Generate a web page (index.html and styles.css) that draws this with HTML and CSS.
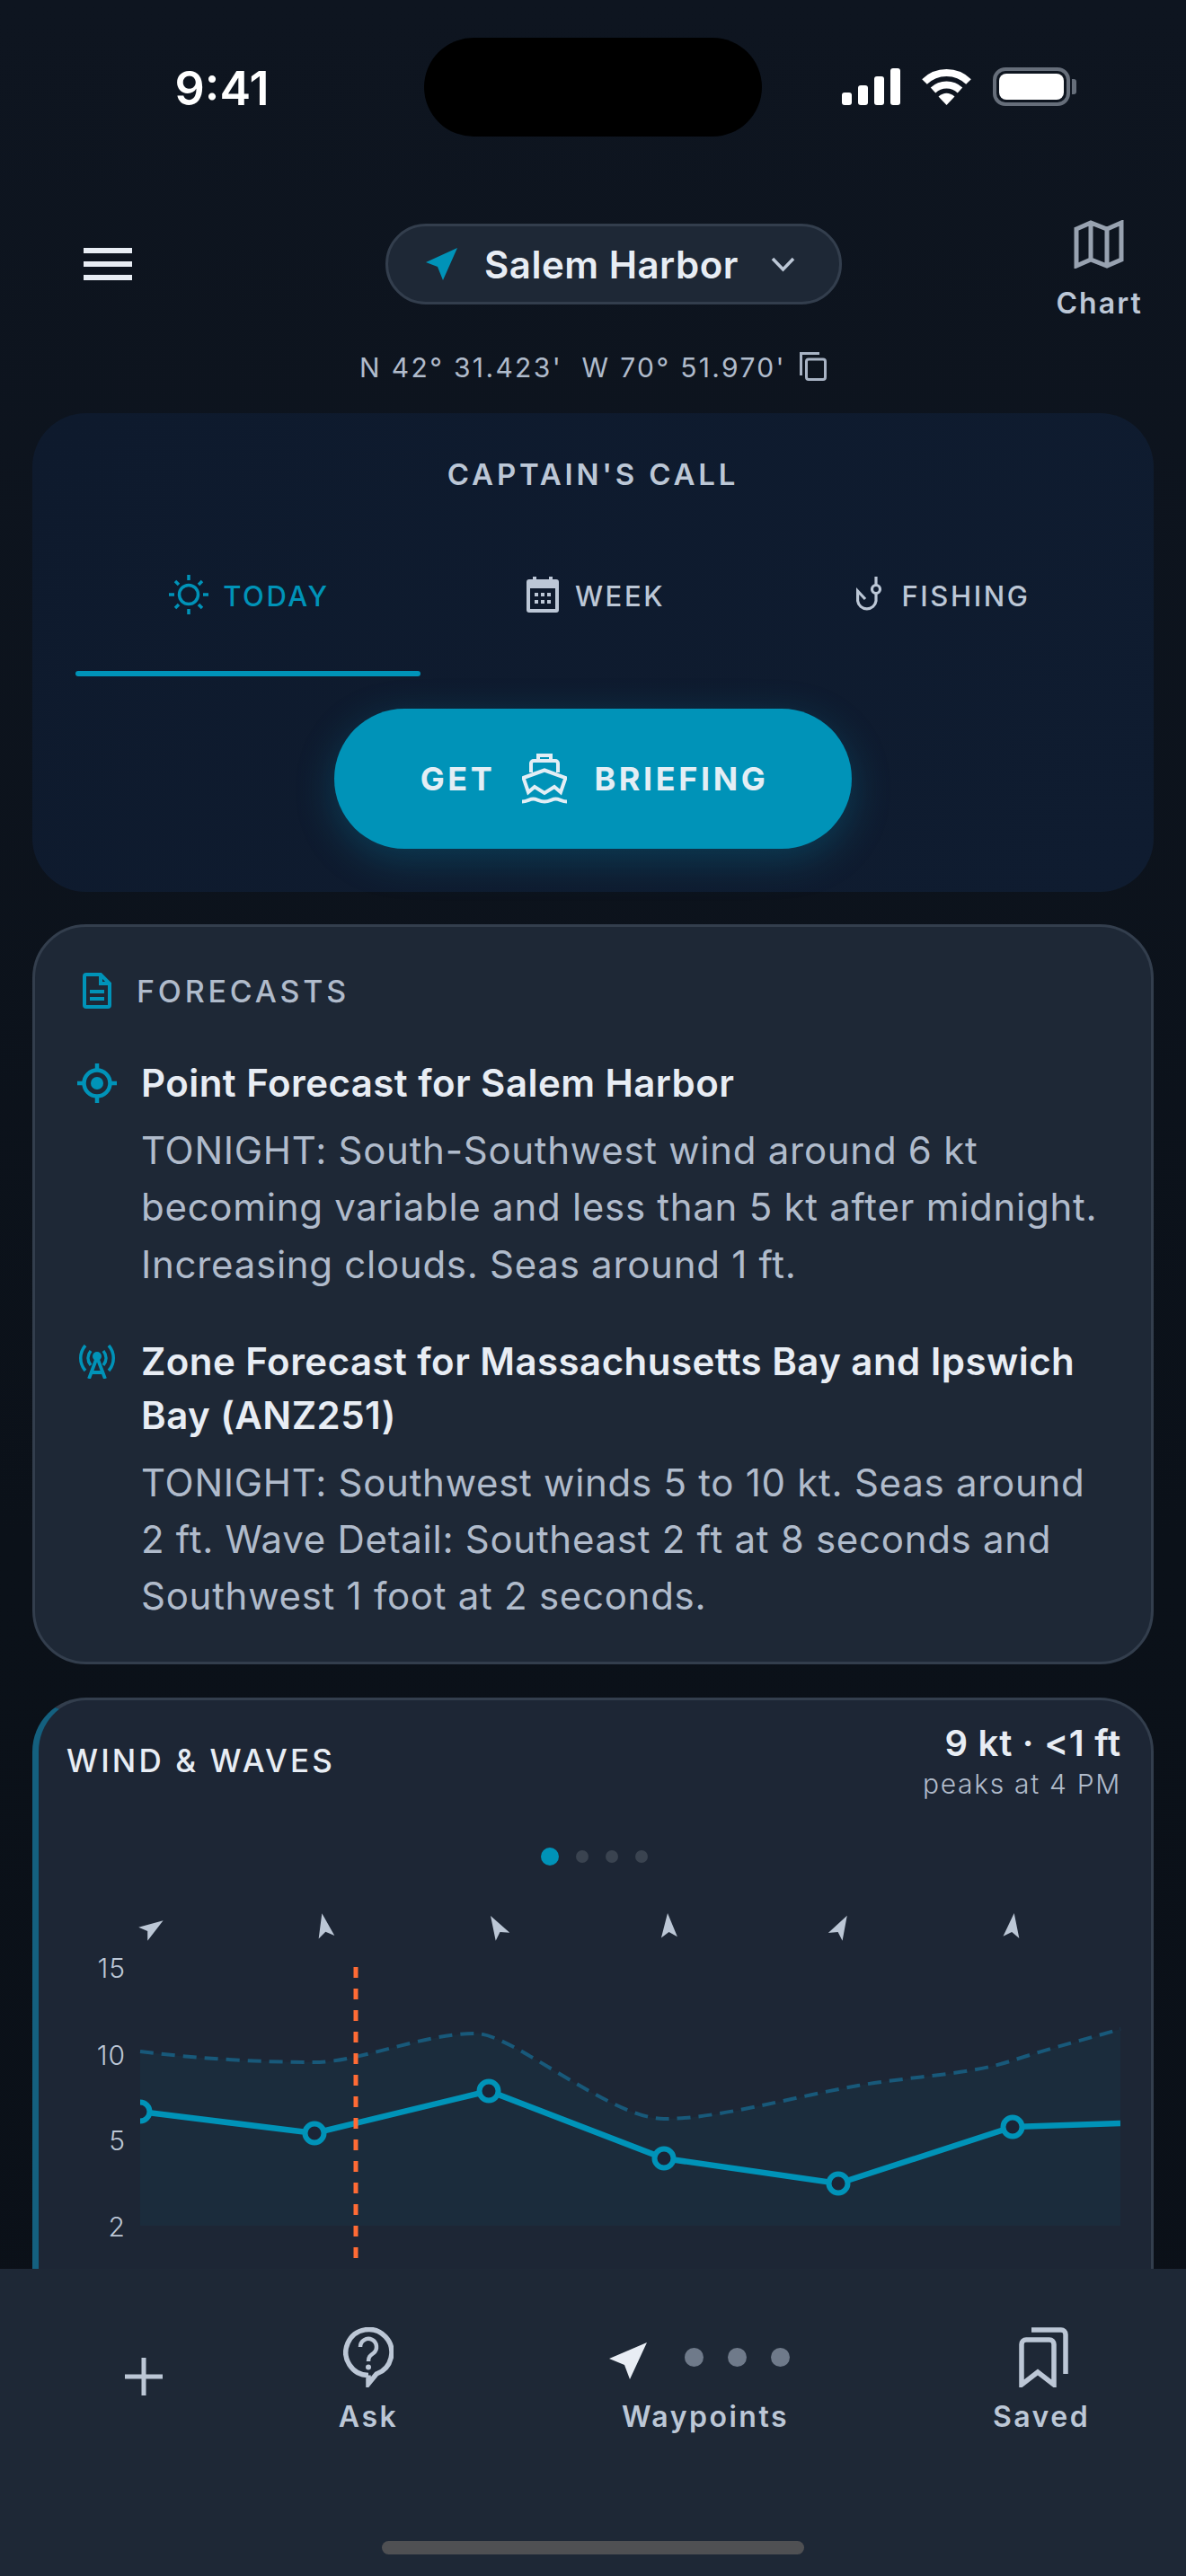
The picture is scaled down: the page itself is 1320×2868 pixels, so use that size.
FILE: index.html
```html
<!DOCTYPE html>
<html lang="en">
<head>
    <meta charset="UTF-8">
    <meta name="viewport" content="width=device-width, initial-scale=1.0">
    <title>Captain's Call</title>
    <link rel="stylesheet" href="styles.css">
</head>
<body>
<div class="app">
    <main class="main">
        <div class="status">
            <div class="status-time">9:41</div>
            <div class="island"></div>
            <div class="status-icons">
                <div class="signal"><span class="b1"></span><span class="b2"></span><span class="b3"></span><span class="b4"></span></div>
                <svg class="wifi" width="57" height="41" viewBox="0 0 57 41">
                    <path d="M4 15A35 35 0 0 1 53 15" fill="none" stroke="#fff" stroke-width="8"/>
                    <path d="M13.5 24.5A22 22 0 0 1 43.5 24.5" fill="none" stroke="#fff" stroke-width="8"/>
                    <path d="M19.5 31.5Q28.5 24 37.5 31.5L28.5 41Z" fill="#fff"/>
                </svg>
                <div class="battery">
                    <div class="battery-body"><div class="battery-fill"></div></div>
                    <div class="battery-cap"></div>
                </div>
            </div>
        </div>

        <div class="top-bar">
            <div class="menu-col">
                <div class="menu"><span></span><span></span><span></span></div>
            </div>
            <div class="location">
                <svg width="38" height="36" viewBox="0 0 38 36"><path d="M36 0L1 16L14 21L20 36Z" fill="#0093b8"/></svg>
                <span class="location-name">Salem Harbor</span>
                <svg class="chevron" width="27" height="18" viewBox="0 0 27 18"><path d="M2 3L13.5 15L25 3" fill="none" stroke="#bcc7d6" stroke-width="3.5"/></svg>
            </div>
            <div class="chart-link">
                <svg width="56" height="54" viewBox="0 0 56 54"><path d="M3 10L19 3L37 10L53 3V44L37 51L19 44L3 51ZM19 3V44M37 10V51" fill="none" stroke="#98a2b0" stroke-width="5" stroke-linejoin="miter"/></svg>
                <span>Chart</span>
            </div>
        </div>

        <div class="coords">
            <span>N 42° 31.423'&nbsp; W 70° 51.970'</span>
            <svg width="30" height="32" viewBox="0 0 30 32"><path d="M1.500 26V1.500H22" fill="none" stroke="#a8b3c4" stroke-width="3"/><rect x="7.500" y="8" width="21" height="22.500" rx="2.500" fill="none" stroke="#a8b3c4" stroke-width="3"/></svg>
        </div>

        <section class="call-card">
            <div class="call-title">CAPTAIN'S CALL</div>
            <div class="tabs">
                <div class="tab active">
                    <div class="tab-label">
                        <svg width="44" height="44" viewBox="0 0 44 44" fill="none" stroke="#0093b8" stroke-width="3.500"><circle cx="22" cy="22" r="10.500"/><path d="M22 0V6M22 38V44M0 22H6M38 22H44M7 7L11 11M33 33L37 37M37 7L33 11M11 33L7 37"/></svg>
                        <span>TODAY</span>
                    </div>
                    <div class="tab-line"></div>
                </div>
                <div class="tab">
                    <div class="tab-label">
                        <svg width="36" height="40" viewBox="0 0 36 40">
                            <path d="M7 0H11V3H25V0H29V3H33A3 3 0 0 1 36 6V37A3 3 0 0 1 33 40H3A3 3 0 0 1 0 37V6A3 3 0 0 1 3 3H7Z" fill="#bcc7d6"/>
                            <rect x="4" y="13" width="28" height="23" fill="#0e1a2d"/>
                            <path d="M9 18h4v4h-4zM16 18h4v4h-4zM23 18h4v4h-4zM9 26h4v4h-4zM16 26h4v4h-4zM23 26h4v4h-4z" fill="#bcc7d6"/>
                        </svg>
                        <span>WEEK</span>
                    </div>
                </div>
                <div class="tab">
                    <div class="tab-label">
                        <svg width="30" height="40" viewBox="0 0 30 40" fill="none" stroke="#bcc7d6" stroke-width="3.200"><path d="M22 0V9"/><circle cx="22" cy="14" r="4.500"/><path d="M22 19V27A10.300 10.300 0 0 1 1.600 27V16L10 25"/></svg>
                        <span>FISHING</span>
                    </div>
                </div>
            </div>
            <div class="briefing">
                <span>GET</span>
                <svg width="50" height="56" viewBox="0 0 50 56" fill="none" stroke="#e3eef5" stroke-width="4">
                    <path d="M18 8V2H32V8"/>
                    <path d="M10 21V11A3 3 0 0 1 13 8H37A3 3 0 0 1 40 11V21"/>
                    <path d="M1.500 27L25 18.500L48.500 27L43 43L36 37L25 44L14 37L7 43Z"/>
                    <path d="M0 53.500C6 53.500 8 50.500 12.500 50.500S19 53.500 25 53.500S33 50.500 37.500 50.500S44 53.500 50 53.500"/>
                </svg>
                <span>BRIEFING</span>
            </div>
        </section>

        <section class="forecast-card">
            <div class="forecast-head">
                <div class="icon-col">
                    <svg class="doc-icon" width="32" height="40" viewBox="0 0 32 40" fill="none" stroke="#0093b8" stroke-width="4"><path d="M4 2H20L30 12V36A2 2 0 0 1 28 38H4A2 2 0 0 1 2 36V4A2 2 0 0 1 4 2Z"/><path d="M20 2V12H30"/><path d="M8 21H24M8 29H24"/></svg>
                </div>
                <span>FORECASTS</span>
            </div>
            <div class="forecast-item">
                <div class="icon-col item-icon">
                    <svg width="44" height="44" viewBox="0 0 44 44" fill="none" stroke="#0093b8" stroke-width="4.500"><circle cx="22" cy="22" r="14.500"/><circle cx="22" cy="22" r="7" fill="#0093b8" stroke="none"/><path d="M22 0V7M22 37V44M0 22H7M37 22H44"/></svg>
                </div>
                <div class="item-text">
                    <h3>Point Forecast for Salem Harbor</h3>
                    <p>TONIGHT: South-Southwest wind around 6 kt becoming variable and less than 5 kt after midnight. Increasing clouds. Seas around 1 ft.</p>
                </div>
            </div>
            <div class="forecast-item">
                <div class="icon-col item-icon">
                    <svg width="40" height="38" viewBox="0 0 40 38" fill="none" stroke="#0093b8" stroke-width="3.500"><path d="M7 1C0 9 0 21 7 29M33 1C40 9 40 21 33 29M13 7C9 12 9 18 13 23M27 7C31 12 31 18 27 23"/><circle cx="20" cy="13" r="5" fill="#0093b8" stroke="none"/><path d="M20 14L11 38M20 14L29 38M14 31H26" stroke-width="3.800"/></svg>
                </div>
                <div class="item-text">
                    <h3>Zone Forecast for Massachusetts Bay and Ipswich Bay (ANZ251)</h3>
                    <p>TONIGHT: Southwest winds 5 to 10 kt. Seas around 2 ft. Wave Detail: Southeast 2 ft at 8 seconds and Southwest 1 foot at 2 seconds.</p>
                </div>
            </div>
        </section>

        <section class="wind-card">
            <div class="wind-head">
                <div class="wind-title">WIND &amp; WAVES</div>
                <div class="wind-summary">
                    <div class="wind-value">9 kt · &lt;1 ft</div>
                    <div class="wind-peak">peaks at 4 PM</div>
                </div>
            </div>
            <div class="pager"><span class="on"></span><span></span><span></span><span></span></div>
            <svg class="wind-chart" width="1238" height="420" viewBox="43 2120 1238 420">
                <defs>
                    <clipPath id="plot"><rect x="156" y="2200" width="1091" height="300"/></clipPath>
                    <path id="arrow" d="M0 -14L9 13L0 7L-9 13Z" fill="#bcc7d6"/>
                </defs>
                <use href="#arrow" transform="translate(170 2146) rotate(56)"/>
                <use href="#arrow" transform="translate(361 2144) rotate(-11)"/>
                <use href="#arrow" transform="translate(553 2145) rotate(-30)"/>
                <use href="#arrow" transform="translate(744 2144) rotate(-4)"/>
                <use href="#arrow" transform="translate(936 2145) rotate(29)"/>
                <use href="#arrow" transform="translate(1127 2144) rotate(7)"/>

                <g class="y-labels">
                    <text x="140" y="2202">15</text>
                    <text x="140" y="2299">10</text>
                    <text x="140" y="2394">5</text>
                    <text x="140" y="2490">2</text>
                </g>

                <path d="M156 2284C220 2292 290 2296 350 2296C400 2296 470 2264 530 2264C570 2264 680 2359 739 2359C800 2359 880 2335 955 2322C1010 2312 1080 2310 1127 2294C1170 2280 1210 2270 1247 2259V2478H156Z" fill="#1b2c3c"/>
                <path d="M156 2284C220 2292 290 2296 350 2296C400 2296 470 2264 530 2264C570 2264 680 2359 739 2359C800 2359 880 2335 955 2322C1010 2312 1080 2310 1127 2294C1170 2280 1210 2270 1247 2259" fill="none" stroke="#18597a" stroke-width="4" stroke-dasharray="15 9"/>

                <g clip-path="url(#plot)">
                    <path d="M156 2351L350 2375L544 2328L739 2403L933 2431L1127 2368L1247 2364" fill="none" stroke="#0093b8" stroke-width="6.500"/>
                    <g fill="#1b2436" stroke="#0093b8" stroke-width="6">
                        <circle cx="156" cy="2351" r="10.500"/>
                        <circle cx="350" cy="2375" r="10.500"/>
                        <circle cx="544" cy="2328" r="10.500"/>
                        <circle cx="739" cy="2403" r="10.500"/>
                        <circle cx="933" cy="2431" r="10.500"/>
                        <circle cx="1127" cy="2368" r="10.500"/>
                    </g>
                </g>
                <path d="M396 2190V2514" stroke="#ff6b35" stroke-width="5" stroke-dasharray="12 12"/>
            </svg>
        </section>
    </main>

    <nav class="bottom-nav">
        <div class="nav-items">
            <div class="nav-item nav-plus">
                <svg width="44" height="44" viewBox="0 0 44 44"><path d="M22 1V43M1 22H43" stroke="#bcc7d6" stroke-width="5"/></svg>
            </div>
            <div class="nav-item">
                <div class="nav-icon">
                    <svg width="56" height="67" viewBox="0 0 56 67" fill="none" stroke="#bcc7d6" stroke-width="5.500">
                        <path d="M28 53.500A25.500 25.500 0 1 1 37 52L28 63V53.500"/>
                        <path d="M19 22A9 9 0 1 1 33.500 29C30 31.500 28 33 28 38" stroke-width="4.500"/>
                        <circle cx="28" cy="44.500" r="3" fill="#bcc7d6" stroke="none"/>
                    </svg>
                </div>
                <span>Ask</span>
            </div>
            <div class="nav-item">
                <div class="nav-icon waypoints">
                    <svg class="waypoint-arrow" width="42" height="41" viewBox="0 0 42 41"><path d="M42 0L0 18L17 25L23 41Z" fill="#e8edf4"/></svg>
                    <i></i><i></i><i></i>
                </div>
                <span>Waypoints</span>
            </div>
            <div class="nav-item">
                <div class="nav-icon saved-icon">
                    <svg width="56" height="67" viewBox="0 0 56 67" fill="none" stroke="#bcc7d6" stroke-width="5.500">
                        <path d="M15 3H48A5 5 0 0 1 53 8V52"/>
                        <path d="M4 64V19A5 5 0 0 1 9 14H35A5 5 0 0 1 40 19V64L22 50Z"/>
                    </svg>
                </div>
                <span>Saved</span>
            </div>
        </div>
        <div class="home-indicator"></div>
    </nav>
</div>
</body>
</html>
```

FILE: styles.css
```css
:root {
    --bg-color: #0d131c;
    --card-bg: #1e2836;
    --card-border: #333e4d;
    --accent-color: #0093b8;
    --heading-color: #e8edf4;
    --label-color: #bcc7d6;
    --muted-color: #b0bbcb;
}

* {
    box-sizing: border-box;
}

body {
    margin: 0;
    background-color: var(--bg-color);
    color: var(--heading-color);
    font-family: Inter, "Noto Sans", sans-serif;
}

.app {
    width: 1320px;
    height: 2868px;
    display: flex;
    flex-direction: column;
    overflow: hidden;
    background: linear-gradient(180deg, #0e1520 0%, #0b1119 60%, #0b1018 100%);
}

.main {
    flex: 1;
    min-height: 0;
    overflow: hidden;
    padding: 0 36px;
}

/* status bar */
.status {
    height: 245px;
    margin: 0 -36px;
    padding-top: 42px;
    display: flex;
    align-items: flex-start;
}

.status-time {
    width: 472px;
    padding-left: 22px;
    height: 110px;
    line-height: 113px;
    text-align: center;
    font-size: 52px;
    font-weight: 600;
    color: #fff;
}

.island {
    width: 376px;
    height: 110px;
    border-radius: 55px;
    background-color: #000;
}

.status-icons {
    padding: 33px 0 0 89px;
    display: flex;
    align-items: center;
    gap: 23px;
}

.signal {
    display: flex;
    align-items: flex-end;
    gap: 7px;
    height: 41px;
}

.signal span {
    width: 11px;
    border-radius: 3px;
    background-color: #fff;
}

.signal .b1 { height: 14px; }
.signal .b2 { height: 22px; }
.signal .b3 { height: 32px; }
.signal .b4 { height: 41px; }

.battery {
    display: flex;
    align-items: center;
    gap: 2px;
}

.battery-body {
    width: 86px;
    height: 43px;
    padding: 3px;
    border: 4px solid #666e7a;
    border-radius: 14px;
}

.battery-fill {
    height: 100%;
    border-radius: 8px;
    background-color: #fff;
}

.battery-cap {
    width: 5px;
    height: 17px;
    border-radius: 0 3px 3px 0;
    background-color: #666e7a;
}

/* header */
.top-bar {
    height: 105px;
    display: grid;
    grid-template-columns: 393px 508px 1fr;
}

.menu-col {
    padding: 31px 0 0 57px;
}

.menu span {
    display: block;
    width: 54px;
    height: 6px;
    margin-bottom: 9px;
    background-color: var(--heading-color);
}

.location {
    margin-top: 4px;
    height: 90px;
    padding-left: 41px;
    display: flex;
    align-items: center;
    border: 3px solid var(--card-border);
    border-radius: 45px;
    background-color: var(--card-bg);
}

.location-name {
    margin-left: 28px;
    font-size: 42px;
    font-weight: 600;
    letter-spacing: 0.5px;
    color: var(--heading-color);
}

.chevron {
    margin-left: 36px;
}

.chart-link {
    padding-right: 12px;
    display: flex;
    flex-direction: column;
    align-items: flex-end;
}

.chart-link svg {
    margin-right: 21px;
}

.chart-link span {
    margin-top: 19px;
    font-size: 32px;
    font-weight: 600;
    letter-spacing: 2.1px;
    color: var(--label-color);
}

.coords {
    height: 32px;
    margin-top: 42px;
    padding-top: 2px;
    display: flex;
    justify-content: center;
    align-items: center;
    gap: 15px;
    font-size: 30px;
    letter-spacing: 2.35px;
    font-weight: 400;
    color: var(--muted-color);
}

.coords svg {
    margin-top: -2px;
}

/* captain's call */
.call-card {
    height: 533px;
    margin-top: 36px;
    padding: 48px 48px 0;
    border-radius: 60px;
    background: linear-gradient(135deg, #0e1a2d 0%, #0f1c30 100%);
}

.call-title {
    height: 40px;
    line-height: 40px;
    text-align: center;
    font-size: 33px;
    font-weight: 600;
    letter-spacing: 3.8px;
    color: var(--label-color);
}

.tabs {
    margin-top: 52px;
    display: grid;
    grid-template-columns: repeat(3, 1fr);
}

.tab-label {
    height: 124px;
    padding-top: 3px;
    display: flex;
    justify-content: center;
    align-items: center;
    gap: 16px;
    font-size: 31px;
    font-weight: 500;
    letter-spacing: 2.6px;
    color: var(--label-color);
}

.tab-label svg {
    margin-top: -3px;
}

.tab:nth-child(1) .tab-label { padding-left: 3px; }
.tab:nth-child(2) .tab-label { padding-left: 6px; gap: 18px; }
.tab:nth-child(3) .tab-label { padding-left: 12px; gap: 20px; }

.tab.active .tab-label {
    color: var(--accent-color);
}

.tab-line {
    height: 6px;
    margin-top: 23px;
    border-radius: 3px;
    background-color: var(--accent-color);
}

.briefing {
    width: 576px;
    height: 156px;
    margin: 36px auto 0;
    padding-left: 3px;
    display: flex;
    justify-content: center;
    align-items: center;
    gap: 30px;
    border-radius: 78px;
    background-color: #0093b8;
    box-shadow: 0 12px 44px rgba(0, 149, 187, 0.28);
    font-size: 36px;
    font-weight: 700;
    letter-spacing: 3.6px;
    color: #e3eef5;
}

/* forecasts */
.forecast-card {
    margin-top: 36px;
    padding: 51px 45px 41px;
    border: 3px solid var(--card-border);
    border-radius: 60px;
    background-color: var(--card-bg);
}

.forecast-head {
    height: 40px;
    display: flex;
    align-items: center;
    gap: 20px;
    font-size: 34px;
    font-weight: 500;
    letter-spacing: 3.8px;
    color: var(--muted-color);
}

.icon-col {
    width: 48px;
    flex: none;
    display: flex;
    justify-content: center;
}

.doc-icon {
    margin-left: -1px;
}

.item-icon {
    height: 60px;
    align-items: center;
}

.forecast-item {
    margin-top: 53px;
    display: flex;
    gap: 25px;
}

.forecast-item + .forecast-item {
    margin-top: 47px;
}

.item-text h3 {
    margin: 0;
    font-size: 42px;
    line-height: 60px;
    font-weight: 600;
    letter-spacing: 0.45px;
    color: var(--heading-color);
}

.item-text p {
    margin: 13px 0 0;
    font-size: 42px;
    line-height: 63.3px;
    font-weight: 400;
    letter-spacing: 0.72px;
    color: var(--muted-color);
}

/* wind and waves */
.wind-card {
    margin-top: 37px;
    padding: 23px 33px 60px 31px;
    border: 3px solid var(--card-border);
    border-left: 7px solid #14607f;
    border-radius: 60px;
    background-color: #1d2635;
}

.wind-head {
    display: flex;
    justify-content: space-between;
    align-items: center;
}

.wind-title {
    margin-top: -3px;
    font-size: 35px;
    font-weight: 500;
    letter-spacing: 3.1px;
    color: var(--heading-color);
}

.wind-summary {
    text-align: right;
}

.wind-value {
    height: 50px;
    line-height: 50px;
    font-size: 40px;
    font-weight: 600;
    letter-spacing: 0.75px;
    color: var(--heading-color);
}

.wind-peak {
    height: 41px;
    line-height: 41px;
    font-size: 30px;
    font-weight: 300;
    letter-spacing: 1.7px;
    color: var(--muted-color);
}

.pager {
    height: 20px;
    margin-top: 50px;
    display: flex;
    justify-content: center;
    align-items: center;
    gap: 19px;
}

.pager span {
    width: 14px;
    height: 14px;
    border-radius: 50%;
    background-color: #3a4350;
}

.pager span.on {
    width: 20px;
    height: 20px;
    background-color: var(--accent-color);
}

.wind-chart {
    display: block;
    margin: 43px -33px 0 -31px;
}

.y-labels text {
    font-family: Inter, sans-serif;
    font-size: 30px;
    font-weight: 300;
    letter-spacing: 1px;
    text-anchor: end;
    fill: var(--label-color);
}

/* bottom nav */
.bottom-nav {
    height: 342px;
    flex: none;
    padding-top: 65px;
    display: flex;
    flex-direction: column;
    background-color: var(--card-bg);
}

.nav-items {
    display: grid;
    grid-template-columns: 320px 180px 570px 178px;
}

.nav-item {
    display: flex;
    flex-direction: column;
    align-items: center;
    font-size: 32px;
    font-weight: 600;
    letter-spacing: 2.5px;
    color: var(--label-color);
}

.nav-item span {
    margin-top: 13px;
    height: 40px;
    line-height: 40px;
}

.nav-plus {
    padding-top: 33px;
}

.nav-icon {
    height: 67px;
    display: flex;
    align-items: center;
}

.saved-icon {
    margin-left: 4px;
}

.waypoints {
    margin-right: 14px;
    gap: 27px;
}

.waypoints i {
    width: 21px;
    height: 21px;
    border-radius: 50%;
    background-color: #6f7a8a;
}

.waypoint-arrow {
    margin-right: 15px;
    margin-top: 7px;
}

.home-indicator {
    width: 470px;
    height: 15px;
    margin: auto auto 24px;
    border-radius: 8px;
    background-color: #4f5053;
}
```
